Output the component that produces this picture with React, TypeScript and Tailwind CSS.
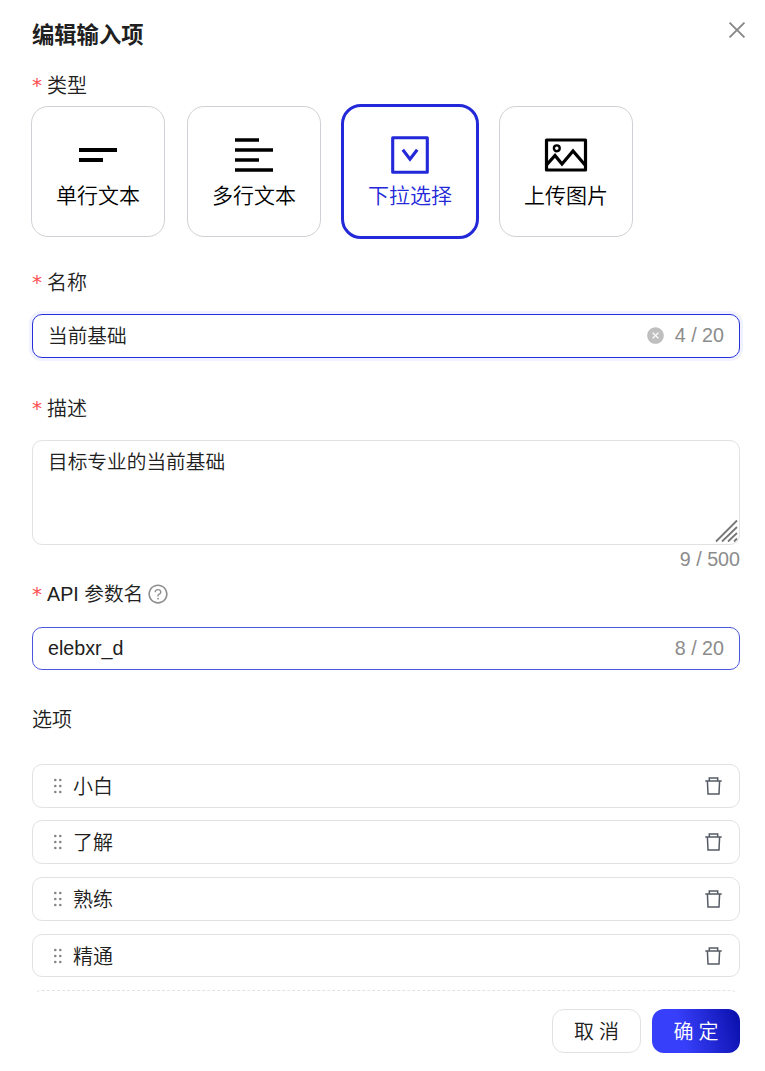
import React from 'react';
import { AiFillCloseCircle, AiOutlineClose, AiOutlineQuestionCircle } from 'react-icons/ai';

type FieldType = 'single' | 'multi' | 'select' | 'image';

const TYPE_OPTIONS: Array<{ key: FieldType; label: string }> = [
  { key: 'single', label: '单行文本' },
  { key: 'multi', label: '多行文本' },
  { key: 'select', label: '下拉选择' },
  { key: 'image', label: '上传图片' },
];

const CHOICES = [
  { label: '小白', row: 'mt-[30px] h-11' },
  { label: '了解', row: 'mt-3 h-11' },
  { label: '熟练', row: 'mt-[13px] h-11' },
  { label: '精通', row: 'mt-[13px] h-[43px]' },
];

const TypeIcon: React.FC<{ type: FieldType }> = ({ type }) => {
  switch (type) {
    case 'single':
      return (
        <svg width="44" height="44" viewBox="0 0 44 44" stroke="currentColor" strokeWidth="3.8">
          <path d="M3 17h38M3 27h24" />
        </svg>
      );
    case 'multi':
      return (
        <svg width="44" height="44" viewBox="0 0 44 44" stroke="currentColor" strokeWidth="3.5">
          <path d="M3 7h24M3 17h38M3 27h24M3 37h38" />
        </svg>
      );
    case 'select':
      return (
        <svg width="44" height="44" viewBox="0 0 44 44" fill="none" stroke="currentColor" strokeWidth="3.1">
          <path d="M4.7 4.7h34.6v34.6H4.7z" strokeLinejoin="round" />
          <path d="M14.8 16.8L22 26.3l7.2-9.5" />
        </svg>
      );
    default:
      return (
        <svg width="44" height="44" viewBox="0 0 44 44" fill="none" stroke="currentColor" strokeWidth="3.2">
          <path d="M2.5 7h39v30h-39z" strokeLinejoin="round" />
          <circle cx="12.8" cy="15.3" r="2.9" strokeWidth="2.4" />
          <path d="M2.5 32l8.5-9.5 7 8.5 11-13 12.5 14.5" />
        </svg>
      );
  }
};

const TrashIcon: React.FC = () => (
  <svg width="20" height="20" viewBox="0 0 20 20" fill="none" stroke="#565c66" strokeWidth="1.5">
    <path d="M2.3 5h16.4M6.3 5V2h8.4v3M4.4 5l.6 13h11l.6-13" />
  </svg>
);

const DragHandle: React.FC = () => (
  <svg width="10" height="18" viewBox="0 0 10 18" fill="#858585">
    {[3, 9, 15].map((y) => (
      <React.Fragment key={y}>
        <circle cx="2.3" cy={y} r="1.3" />
        <circle cx="7.3" cy={y} r="1.3" />
      </React.Fragment>
    ))}
  </svg>
);

const FieldLabel: React.FC<{ className: string; children: React.ReactNode }> = ({ className, children }) => (
  <div className={`flex h-7 items-center text-[20px] leading-7 ${className}`}>
    <span className="mr-[5px] w-[10px] pb-[3px] font-['DejaVu_Sans'] text-[20px] font-normal text-[#ff4d4f]">*</span>
    {children}
  </div>
);

export default function App() {
  return (
    <main className="h-[1071px] w-[765px] overflow-hidden bg-white pr-[25px] pl-8 font-['Liberation_Sans','Noto_Sans_CJK_SC',sans-serif] font-[350] text-[#202020]">
      <header className="flex items-start justify-between pt-[18px]">
        <h1 className="pt-0.5 text-[22.3px] leading-8 font-bold">编辑输入项</h1>
        <button type="button" aria-label="关闭" className="-mr-[9px] text-[#888]">
          <AiOutlineClose size={24} />
        </button>
      </header>

      <FieldLabel className="mt-5">类型</FieldLabel>
      <div className="mt-[6px] -ml-px flex gap-[22px]">
        {TYPE_OPTIONS.map((option) => (
          <button
            key={option.key}
            type="button"
            className={
              option.key === 'select'
                ? '-m-0.5 flex h-[135px] w-[138px] flex-col items-center rounded-[20px] border-3 border-[#2329d9] pt-[26px] text-[#2329d9]'
                : 'flex h-[131px] w-[134px] flex-col items-center rounded-[17px] border border-[#d0d1d6] pt-[26px] text-black'
            }
          >
            <TypeIcon type={option.key} />
            <span className="mt-[3px] text-[21px] leading-8">{option.label}</span>
          </button>
        ))}
      </div>

      <FieldLabel className="mt-8">名称</FieldLabel>
      <div className="mt-[17px] flex h-11 items-center rounded-[10px] border border-[#2730d8] px-[15px] text-[19.7px] shadow-[0_0_0_3px_#f0f2ff]">
        <span className="flex-1 pt-0.5">当前基础</span>
        <AiFillCloseCircle className="mb-0.5" size={19} color="#bfbfbf" />
        <span className="ml-[10px] text-[#8c8c8c]">4 / 20</span>
      </div>

      <FieldLabel className="mt-[37px]">描述</FieldLabel>
      <div className="mt-[17px] flex h-[105px] justify-between rounded-[10px] border border-[#e2e2e4] pl-[15px] text-[19.7px]">
        <span className="pt-[7px] leading-7">目标专业的当前基础</span>
        <svg className="mb-px self-end" width="24" height="24" viewBox="0 0 24 24" stroke="#777" strokeWidth="1.8">
          <path d="M1 22.5L22 1.5M7 22.5L22 8M13 22.5l9-8.5M19 22.5l3-3" />
        </svg>
      </div>
      <p className="text-right text-[19.7px] leading-7 text-[#8c8c8c]">9 / 500</p>

      <FieldLabel className="mt-2">
        <span className="pb-0.5 text-[19.7px]">API 参数名</span>
        <AiOutlineQuestionCircle className="mb-0.5 ml-1" size={22} color="#8f8f8f" />
      </FieldLabel>
      <div className="mt-[18px] flex h-[43px] items-center justify-between rounded-[10px] border border-[#4d57de] px-[15px] text-[19.7px]">
        <span>elebxr_d</span>
        <span className="text-[#8c8c8c]">8 / 20</span>
      </div>

      <h2 className="mt-9 text-[20px] leading-7">选项</h2>
      <div className="h-[258px] overflow-hidden">
        {CHOICES.map((choice) => (
          <div key={choice.label} className={`flex items-center rounded-[10px] border border-[#e2e2e4] pr-4 pl-5 ${choice.row}`}>
            <DragHandle />
            <span className="ml-[10px] flex-1 pt-0.5 text-[20px]">{choice.label}</span>
            <TrashIcon />
          </div>
        ))}
        <div className="mt-[13px] h-11 rounded-[10px] border border-dashed border-[#e2e2e4]" />
      </div>

      <footer className="mt-[17px] flex justify-end gap-[11px] text-[20px]">
        <button type="button" className="h-11 w-[89px] rounded-xl border border-[#e2e2e4] pt-0.5 pl-[5px] tracking-[5px]">
          取消
        </button>
        <button
          type="button"
          className="h-11 w-[88px] rounded-xl bg-[linear-gradient(75deg,#373ffa_35%,#0c12af_95%)] pt-0.5 pl-[5px] tracking-[5px] text-white"
        >
          确定
        </button>
      </footer>
    </main>
  );
}
